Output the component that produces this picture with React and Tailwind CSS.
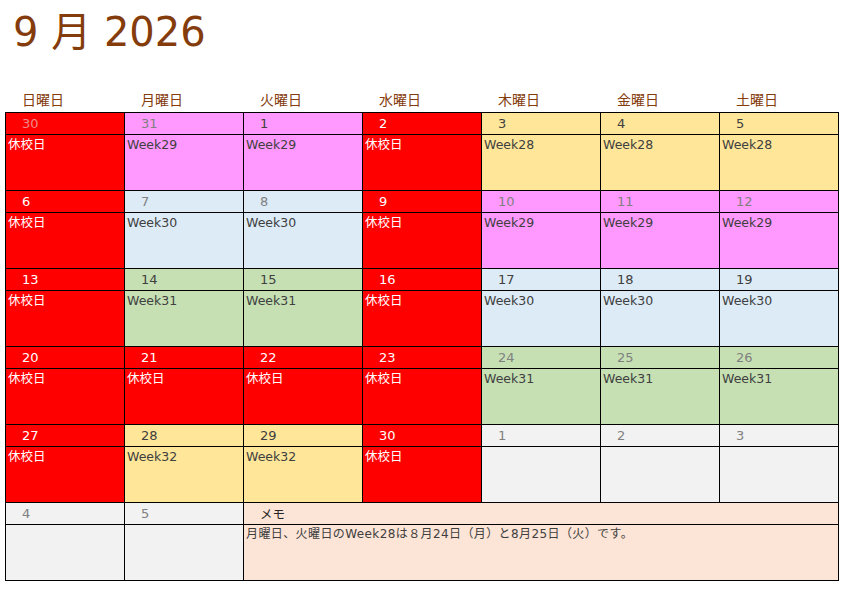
import React from "react";

const R = "bg-[#ff0000]";
const P = "bg-[#ff99ff]";
const Y = "bg-[#ffe699]";
const B = "bg-[#ddebf7]";
const G = "bg-[#c6e0b4]";
const Q = "bg-[#f2f2f2]";

const W = "text-[#ffffff]";
const F = "text-[#ee8a8a]";
const D = "text-[#404040]";
const L = "text-[#808080]";

const H = "休校日";

const weeks = [
  [
    [30, R, F, H],
    [31, P, L, "Week29"],
    [1, P, D, "Week29"],
    [2, R, W, H],
    [3, Y, D, "Week28"],
    [4, Y, D, "Week28"],
    [5, Y, D, "Week28"],
  ],
  [
    [6, R, W, H],
    [7, B, L, "Week30"],
    [8, B, L, "Week30"],
    [9, R, W, H],
    [10, P, L, "Week29"],
    [11, P, L, "Week29"],
    [12, P, L, "Week29"],
  ],
  [
    [13, R, W, H],
    [14, G, D, "Week31"],
    [15, G, D, "Week31"],
    [16, R, W, H],
    [17, B, D, "Week30"],
    [18, B, D, "Week30"],
    [19, B, D, "Week30"],
  ],
  [
    [20, R, W, H],
    [21, R, W, H],
    [22, R, W, H],
    [23, R, W, H],
    [24, G, L, "Week31"],
    [25, G, L, "Week31"],
    [26, G, L, "Week31"],
  ],
  [
    [27, R, W, H],
    [28, Y, D, "Week32"],
    [29, Y, D, "Week32"],
    [30, R, W, H],
    [1, Q, L, ""],
    [2, Q, L, ""],
    [3, Q, L, ""],
  ],
];

const days = ["日曜日", "月曜日", "火曜日", "水曜日", "木曜日", "金曜日", "土曜日"];

const font = {
  fontFamily: '"DejaVu Sans", "Noto Sans CJK JP", sans-serif',
};

function Week({ cells }) {
  return (
    <>
      {cells.map(([n, bg, nc], i) => (
        <div
          key={"n" + i}
          className={`${bg} ${nc} h-[22px] border-r border-b border-black pl-[16px] text-[13px] leading-[21px]`}
        >
          {n}
        </div>
      ))}
      {cells.map(([n, bg, nc, t], i) => (
        <div
          key={"t" + i}
          className={`${bg} ${bg === R ? "text-white" : "text-[#404040]"} h-[56px] border-r border-b border-black pl-[2px] text-[12.5px] leading-[19px]`}
        >
          {t}
        </div>
      ))}
    </>
  );
}

export default function App() {
  return (
    <div className="w-[847px] h-[591px] bg-white" style={font}>
      <div className="h-[64px] pl-[13px] text-[40px] leading-[64px] text-[#843c0c]">
        9 月 2026
      </div>
      <div className="mt-[24px] ml-[6px] grid h-[24px] grid-cols-[repeat(7,119px)] text-[14px] leading-[24px] text-[#843c0c]">
        {days.map((d) => (
          <div key={d} className="pl-[16px]">
            {d}
          </div>
        ))}
      </div>
      <div className="ml-[5px] grid w-[834px] grid-cols-[repeat(7,119px)] border-l border-t border-black">
        {weeks.map((w, i) => (
          <Week key={i} cells={w} />
        ))}
        <div className={`${Q} h-[22px] border-r border-b border-black pl-[16px] text-[13px] leading-[21px] text-[#808080]`}>
          4
        </div>
        <div className={`${Q} h-[22px] border-r border-b border-black pl-[16px] text-[13px] leading-[21px] text-[#808080]`}>
          5
        </div>
        <div className="col-span-5 h-[22px] border-r border-b border-black bg-[#fce4d6] pl-[16px] text-[12.5px] leading-[23px] text-[#262626]">
          メモ
        </div>
        <div className={`${Q} h-[56px] border-r border-b border-black`}></div>
        <div className={`${Q} h-[56px] border-r border-b border-black`}></div>
        <div className="col-span-5 h-[56px] border-r border-b border-black bg-[#fce4d6] pl-[2px] text-[12px] leading-[19px] tracking-[0.4px] text-[#404040]">
          月曜日、火曜日のWeek28は８月24日（月）と8月25日（火）です。
        </div>
      </div>
    </div>
  );
}
